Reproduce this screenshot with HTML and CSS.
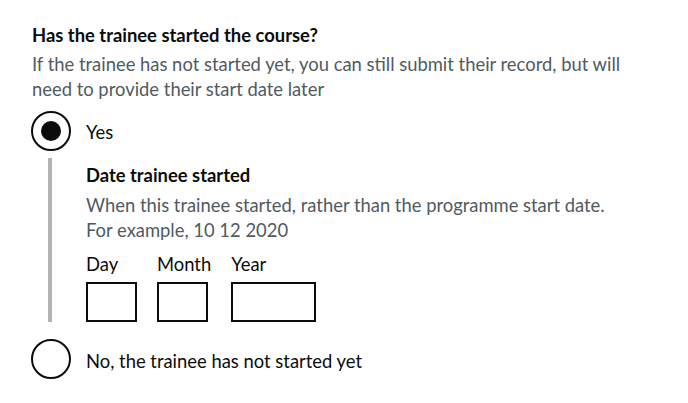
FILE: index.html
```html
<!DOCTYPE html>
<html lang="en">
<head>
<meta charset="utf-8">
<title>Has the trainee started the course?</title>
<link rel="stylesheet" href="styles.css">
</head>
<body>
<form class="form">
  <fieldset class="fieldset">
    <legend class="legend">Has the trainee started the course?</legend>
    <div class="hint hint--after-legend">If the trainee has not started yet, you can still submit their record, but will need to provide their start date later</div>
    <div class="radios">
      <div class="radio-item">
        <span class="radio-circle radio-circle--checked"></span>
        <span class="radio-label radio-label--first">Yes</span>
      </div>
      <div class="conditional">
        <div class="field-label">Date trainee started</div>
        <div class="hint hint--date">When this trainee started, rather than the programme start date.<br>For example, 10 12 2020</div>
        <div class="date-input">
          <div class="date-item">
            <span class="date-label">Day</span>
            <span class="input input--w2"></span>
          </div>
          <div class="date-item">
            <span class="date-label">Month</span>
            <span class="input input--w2"></span>
          </div>
          <div class="date-item">
            <span class="date-label">Year</span>
            <span class="input input--w4"></span>
          </div>
        </div>
      </div>
      <div class="radio-item">
        <span class="radio-circle"></span>
        <span class="radio-label radio-label--last">No, the trainee has not started yet</span>
      </div>
    </div>
  </fieldset>
</form>
</body>
</html>
```
FILE: styles.css
```css
html, body {
  margin: 0;
  background: #ffffff;
}
body {
  padding: 23px 0 0 31px;
  font-family: "Lato", "Liberation Sans", sans-serif;
  font-size: 18.4px;
  line-height: 25px;
  color: #0b0c0c;
}
.form { margin: 0; }
.fieldset {
  margin: 0;
  padding: 0;
  border: 0;
  min-width: 0;
}
.legend {
  padding: 0 0 0 1px;
  font-weight: 700;
  margin-bottom: 4px;
}
.hint {
  color: #505a5f;
}
.hint--after-legend {
  max-width: 600px;
  padding-left: 1px;
  margin-bottom: 9px;
}
.radios {
  display: flex;
  flex-direction: column;
}
.radio-item {
  display: flex;
  align-items: flex-start;
  min-height: 40px;
}
.radio-circle {
  flex: 0 0 auto;
  width: 40px;
  height: 40px;
  box-sizing: border-box;
  border: 2px solid #0b0c0c;
  border-radius: 50%;
  display: flex;
  align-items: center;
  justify-content: center;
}
.radio-circle--checked::after {
  content: "";
  width: 20px;
  height: 20px;
  border-radius: 50%;
  background: #0b0c0c;
}
.radio-label {
  padding: 8px 15px 5px 15px;
}
.radio-label--first {
  padding-top: 9px;
}
.radio-label--last {
  padding-top: 10px;
}
.conditional {
  margin: 7px 0 17px 17px;
  padding: 4px 0 0 34px;
  border-left: 4px solid #b1b4b6;
}
.field-label {
  font-weight: 700;
  padding-top: 1px;
  margin-bottom: 4px;
}
.hint--date {
  padding-top: 1px;
  margin-bottom: 9px;
}
.date-input {
  display: flex;
  gap: 20px;
  align-items: flex-start;
}
.date-item {
  display: flex;
  flex-direction: column;
  align-items: flex-start;
}
.date-label {
  margin-bottom: 5px;
}
.input {
  display: block;
  height: 40px;
  box-sizing: border-box;
  border: 2px solid #0b0c0c;
  background: #ffffff;
}
.input--w2 { width: 51px; }
.input--w4 { width: 85px; }
```
